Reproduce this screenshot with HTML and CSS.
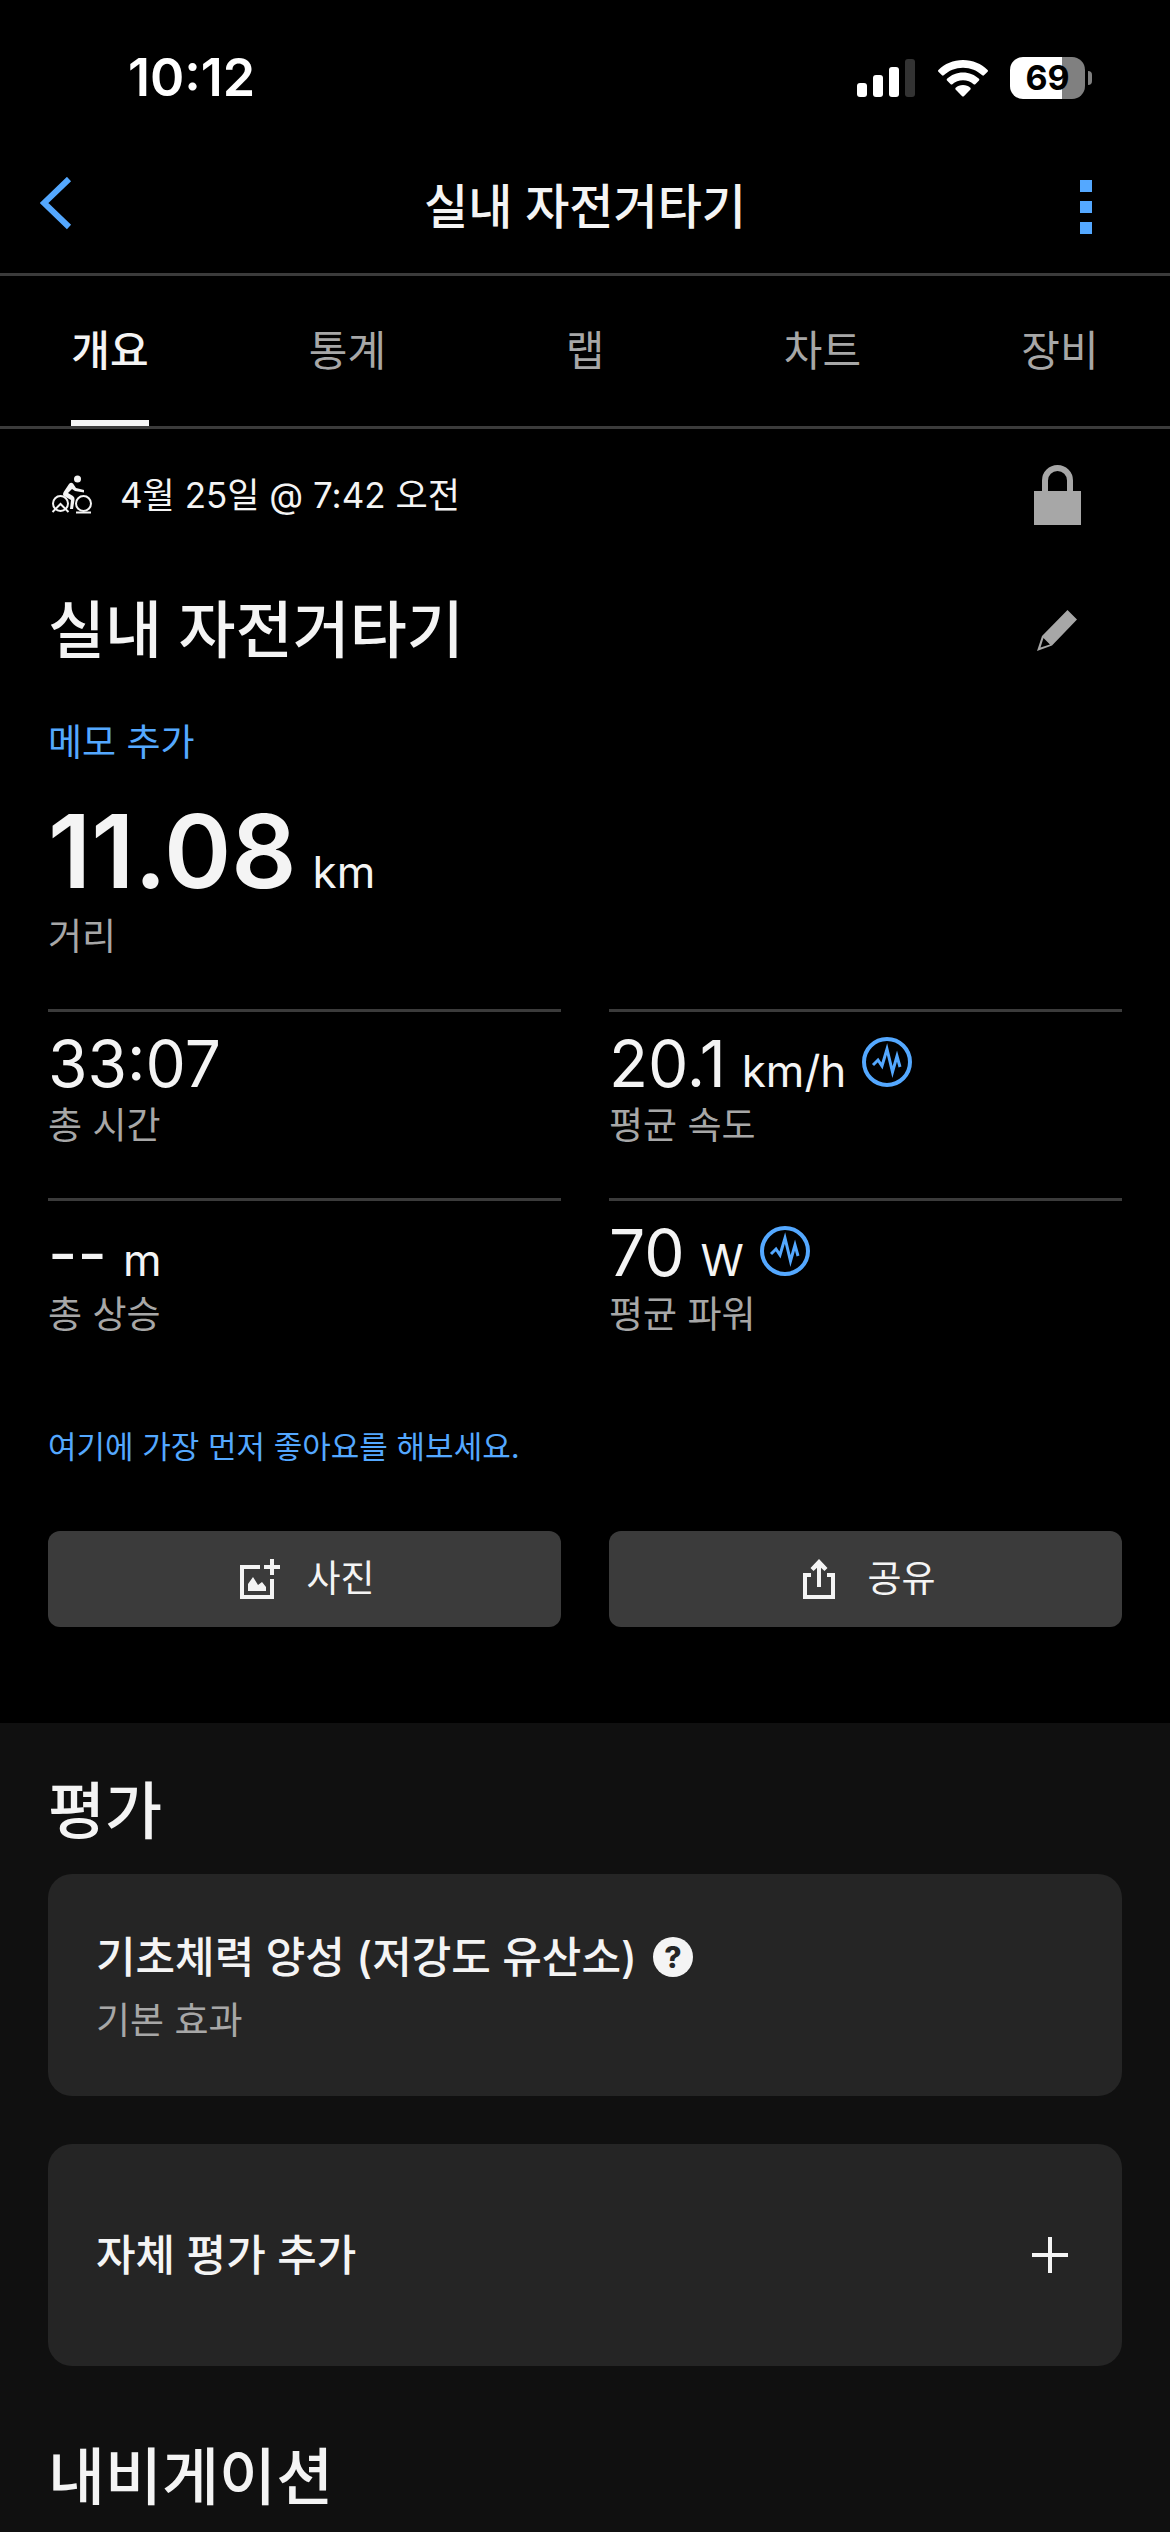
FILE: index.html
```html
<!DOCTYPE html>
<html lang="ko">
	<head>
		<meta charset="utf-8">
		<meta name="viewport" content="width=device-width, initial-scale=1">
		<title>실내 자전거타기</title>
		<link rel="stylesheet" href="styles.css">
	</head>
	<body>
		<div class="status">
			<span class="clock">10:12</span>
			<div class="status_icons">
				<svg width="59" height="38" viewBox="0 0 59 38" fill="#fff">
					<rect x="0" y="24" width="10" height="14" rx="3"/>
					<rect x="16" y="16" width="10" height="22" rx="3"/>
					<rect x="32" y="8" width="10" height="30" rx="3"/>
					<rect x="48" y="0" width="10" height="38" rx="3" fill="#333"/>
				</svg>
				<svg width="50" height="37" viewBox="0 0 50 37" fill="#fff">
					<path d="M25 0C34.700 0 43.400 3.800 49.600 9.900Q50.400 10.800 49.600 11.700L46 15.300Q45.100 16 44.300 15.300C39.300 10.500 32.500 7.700 25 7.700S10.700 10.500 5.700 15.300Q4.900 16 4 15.300L.4 11.700Q-.4 10.800 .4 9.900C6.600 3.800 15.300 0 25 0z"/>
					<path d="M25 12.500C31.200 12.500 36.800 14.900 41 18.800Q41.800 19.700 41 20.500L37.300 24.200Q36.500 24.900 35.600 24.200C32.800 21.700 29.100 20.200 25 20.200S17.200 21.700 14.400 24.200Q13.500 24.900 12.700 24.200L9 20.500Q8.200 19.700 9 18.800C13.200 14.900 18.800 12.500 25 12.500z"/>
					<path d="M25 25C27.900 25 30.400 26 32.300 27.700Q33.200 28.600 32.400 29.500L25.900 36.200Q25 37 24.100 36.200L17.600 29.500Q16.800 28.600 17.700 27.700C19.600 26 22.100 25 25 25z"/>
				</svg>
				<div class="battery">
					<div class="battery_level">69</div>
					<i class="battery_tip"></i>
				</div>
			</div>
		</div>

		<header class="topbar">
			<button type="button" class="icon_btn" aria-label="뒤로">
				<svg width="32" height="60" viewBox="0 0 32 60"><path d="M29 2L4 26L29 50" fill="none" stroke="#54a8ff" stroke-width="6"/></svg>
			</button>
			<div class="topbar_title">실내 자전거타기</div>
			<button type="button" class="icon_btn menu" aria-label="더보기">
				<svg width="12" height="54" viewBox="0 0 12 54" fill="#54a8ff"><path d="M0 0h12v12H0zM0 21h12v12H0zM0 42h12v12H0z"/></svg>
			</button>
		</header>

		<nav class="tabs">
			<a href="#" class="tab active">개요</a>
			<a href="#" class="tab">통계</a>
			<a href="#" class="tab">랩</a>
			<a href="#" class="tab">차트</a>
			<a href="#" class="tab">장비</a>
		</nav>

		<main>
			<section class="summary">
				<div class="row date_row">
					<svg width="48" height="42" viewBox="0 0 48 42" fill="none" stroke="#f4f4f4" stroke-width="2">
						<circle cx="12.500" cy="29.500" r="7.500"/>
						<circle cx="35.500" cy="29.500" r="7.500"/>
						<path d="M4.500 38L12.500 30L20.500 38M28 38.500H43"/>
						<circle cx="29.500" cy="5" r="3.500" fill="#f4f4f4" stroke="none"/>
						<path d="M21 10Q23 8 25 9.500L28 14L36 16V18.500L27 17L24 15L20 19L25 22Q27 23.500 26.500 26L25 35H22L23 26L16 22Q14 20.500 16 17.500z" fill="#f4f4f4" stroke="none"/>
					</svg>
					<span class="date">4월 25일 @ 7:42 오전</span>
					<svg class="lock" width="48" height="60" viewBox="0 0 48 60">
						<path d="M11 28V15.500A12.500 12.500 0 0 1 36 15.500V28" fill="none" stroke="#a7a7a7" stroke-width="6"/>
						<path d="M0 26H47V60H0z" fill="#a7a7a7"/>
					</svg>
				</div>
				<div class="row name_row">
					<h1>실내 자전거타기</h1>
					<button type="button" class="icon_btn edit" aria-label="이름 편집">
						<svg width="40" height="42" viewBox="0 0 40 42" fill="#a7a7a7" fill-rule="evenodd">
							<path d="M30.500 0L40 9.500L15 35.500L0 41L5 26zM6.500 28L3.500 37.500L13 34.500z"/>
						</svg>
					</button>
				</div>
				<a href="#" class="link memo">메모 추가</a>

				<div class="distance">
					<div class="value"><b>11.08</b> <small>km</small></div>
					<div class="label">거리</div>
				</div>
				<div class="stats">
					<div class="stat">
						<div class="value">33:07</div>
						<div class="label">총 시간</div>
					</div>
					<div class="stat">
						<div class="value">20.1 <small>km/h</small>
							<svg width="50" height="50" viewBox="0 0 50 50" fill="none" stroke="#54a8ff"><circle cx="25" cy="25" r="23" stroke-width="4"/><path d="M11 28L16 23L20 29L25 12L30.500 35L35 19L38 30" stroke-width="3"/></svg>
						</div>
						<div class="label">평균 속도</div>
					</div>
					<div class="stat">
						<div class="value">-- <small>m</small></div>
						<div class="label">총 상승</div>
					</div>
					<div class="stat">
						<div class="value">70 <small>W</small>
							<svg width="50" height="50" viewBox="0 0 50 50" fill="none" stroke="#54a8ff"><circle cx="25" cy="25" r="23" stroke-width="4"/><path d="M11 28L16 23L20 29L25 12L30.500 35L35 19L38 30" stroke-width="3"/></svg>
						</div>
						<div class="label">평균 파워</div>
					</div>
				</div>

				<a href="#" class="link likes">여기에 가장 먼저 좋아요를 해보세요.</a>

				<div class="actions">
					<button type="button" class="action">
						<svg width="48" height="40" viewBox="-6 0 48 40" fill="none" stroke="#f4f4f4" stroke-width="4">
							<path d="M20 8H2V38H32V20M32 0V16M24 8H40"/>
							<path d="M8 32V25L13 18L18 26L22 23L26 28V32z" fill="#f4f4f4" stroke="none"/>
						</svg>
						사진
					</button>
					<button type="button" class="action">
						<svg width="48" height="40" viewBox="-8 0 48 40" fill="none" stroke="#f4f4f4" stroke-width="4">
							<path d="M8 16H2V38H30V16H24M16 28V4"/>
							<path d="M16 0L24.500 9L21.500 12L16 7L10.500 12L7.500 9z" fill="#f4f4f4" stroke="none"/>
						</svg>
						공유
					</button>
				</div>
			</section>

			<section class="more">
				<h2>평가</h2>
				<div class="card">
					<div>
						<div class="card_title">기초체력 양성 (저강도 유산소) <button type="button" class="help" aria-label="도움말">?</button></div>
						<div class="label">기본 효과</div>
					</div>
				</div>
				<button type="button" class="card">
					<span class="card_title">자체 평가 추가</span>
					<svg width="48" height="36" viewBox="0 0 48 36"><path d="M24 0V36M6 18H42" fill="none" stroke="#f4f4f4" stroke-width="4"/></svg>
				</button>
				<h2>내비게이션</h2>
			</section>
		</main>
	</body>
</html>
```

FILE: styles.css
```css
* {
    box-sizing: border-box;
}
body {
    margin: 0;
    background: #000;
    color: #f4f4f4;
    font-family: Inter, "Noto Sans CJK KR", sans-serif;
    font-size: 37px;
    line-height: 48px;
}
button {
    margin: 0;
    padding: 0;
    border: 0;
    background: none;
    color: inherit;
    font: inherit;
}
a {
    color: inherit;
    text-decoration: none;
}
svg {
    display: block;
    flex: none;
}

/* 상태 표시줄 */
.status {
    display: flex;
    justify-content: space-between;
    height: 141px;
    padding: 48px 78px 0 128px;
    color: #fff;
}
.clock {
    font-size: 52px;
    font-weight: 600;
    line-height: 60px;
}
.status_icons {
    display: flex;
    align-items: center;
    gap: 22px;
    height: 60px;
}
.battery {
    display: flex;
    align-items: center;
    gap: 3px;
}
.battery_level {
    width: 75px;
    height: 42px;
    border-radius: 13px;
    background: linear-gradient(90deg, #fff 70%, #808080 70%);
    color: #000;
    font-size: 34px;
    font-weight: 700;
    line-height: 42px;
    text-align: center;
}
.battery_tip {
    width: 4px;
    height: 14px;
    border-radius: 0 4px 4px 0;
    background: #808080;
}

/* 상단 바 */
.topbar {
    display: grid;
    grid-template-columns: 1fr auto 1fr;
    align-items: center;
    height: 135px;
    padding: 0 40px;
    border-bottom: 3px solid #3b3b3b;
}
.topbar_title {
    font-size: 48px;
    font-weight: 500;
    line-height: 72px;
}
.icon_btn {
    justify-self: start;
}
.menu {
    justify-self: end;
    margin-right: 38px;
}
.tabs {
    display: flex;
    justify-content: space-between;
    height: 153px;
    padding: 0 71px;
    border-bottom: 3px solid #3b3b3b;
    color: #a7a7a7;
    font-size: 42px;
}
.tab {
    width: 78px;
    line-height: 150px;
    text-align: center;
}
.tab.active {
    border-bottom: 6px solid #f4f4f4;
    color: #f4f4f4;
    font-weight: 500;
}

/* 요약 */
.summary {
    padding: 36px 48px 96px;
}
.row {
    display: flex;
    align-items: center;
}
.date_row {
    gap: 24px;
    height: 60px;
}
.date {
    font-size: 35px;
}
.lock {
    margin-left: auto;
    margin-right: 40px;
}
.name_row {
    justify-content: space-between;
    margin-top: 64px;
}
h1, h2 {
    margin: 0;
    font-size: 62px;
    font-weight: 500;
    line-height: 84px;
}
.edit {
    margin-right: 45px;
}
.link {
    display: block;
    width: fit-content;
    color: #54a8ff;
}
.memo {
    margin-top: 46px;
}
.value {
    display: flex;
    align-items: baseline;
    gap: 16px;
}
.distance {
    margin-top: 30px;
}
.distance .value {
    height: 116px;
    line-height: 108px;
}
.distance b {
    font-size: 102px;
    font-weight: 600;
}
.label {
    color: #a7a7a7;
}
small {
    font-size: 44px;
}
.stats {
    display: grid;
    grid-template-columns: 1fr 1fr;
    column-gap: 48px;
    margin-top: 48px;
}
.stat {
    height: 189px;
    padding-top: 12px;
    border-top: 3px solid #3b3b3b;
}
.stat .value {
    height: 78px;
    font-size: 64px;
    line-height: 80px;
}
.likes {
    margin-top: 36px;
    font-size: 31px;
}
.actions {
    display: grid;
    grid-template-columns: 1fr 1fr;
    column-gap: 48px;
    margin-top: 60px;
}
.action {
    display: flex;
    align-items: center;
    justify-content: center;
    gap: 24px;
    height: 96px;
    border-radius: 12px;
    background: #3b3b3b;
}

/* 평가 */
.more {
    padding: 47px 48px 12px;
    background: #101010;
}
.card {
    display: flex;
    align-items: center;
    justify-content: space-between;
    width: 100%;
    height: 222px;
    margin: 20px 0 48px;
    padding: 0 48px;
    border-radius: 24px;
    background: #252525;
    text-align: left;
}
.card + h2 {
    margin-top: 70px;
}
.card_title {
    display: flex;
    align-items: center;
    gap: 16px;
    font-size: 43px;
    font-weight: 500;
    line-height: 64px;
}
.card .label {
    margin-top: 8px;
}
.help {
    width: 40px;
    height: 40px;
    border-radius: 50%;
    background: #f4f4f4;
    color: #252525;
    font-size: 30px;
    font-weight: 800;
    line-height: 40px;
}
```
